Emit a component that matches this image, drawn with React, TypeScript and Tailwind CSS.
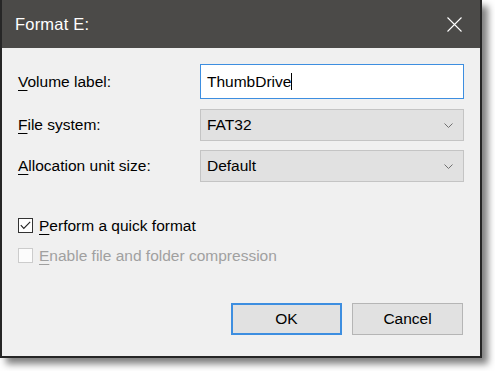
import React from "react";

const font = { fontFamily: '"Liberation Sans", Arial, sans-serif' };

const Chevron = () => (
  <svg width="9" height="5" viewBox="0 0 9 5" className="shrink-0">
    <path d="M0.5 0.5 L4.5 4.5 L8.5 0.5" fill="none" stroke="#707070" strokeWidth="1" />
  </svg>
);

type RowProps = {
  mnemonic: string;
  rest: string;
  children: React.ReactNode;
  className?: string;
};

const Row = ({ mnemonic, rest, children, className }: RowProps) => (
  <div className={"flex items-center " + (className ?? "")}>
    <div className="w-[182px] text-[15.5px] text-black">
      <span className="underline underline-offset-[3px] decoration-1">{mnemonic}</span>
      {rest}
    </div>
    {children}
  </div>
);

const Combo = ({ value }: { value: string }) => (
  <div className="w-[264px] h-[32px] flex items-center justify-between pl-[6px] pr-[10px] bg-[#e1e1e1] border border-[#c4c4c4] text-[15.5px] text-black">
    <span>{value}</span>
    <Chevron />
  </div>
);

export default function App() {
  return (
    <div className="w-[495px] h-[371px] bg-white" style={font}>
      <div className="w-[482px] h-[358px] flex flex-col border-x-2 border-b-2 border-[#262626] bg-[#f0f0f0] shadow-[6px_6px_7px_rgba(0,0,0,0.5)]">
        {/* title bar */}
        <div className="h-[48px] shrink-0 flex items-center justify-between bg-[#4b4a48] pl-[13px] pr-[18px]">
          <span className="text-[16.5px] text-white tracking-[0.2px]">Format E:</span>
          <svg width="15" height="15" viewBox="0 0 15 15">
            <path d="M0.5 0.5 L14.5 14.5 M14.5 0.5 L0.5 14.5" stroke="#ffffff" strokeWidth="1.1" fill="none" />
          </svg>
        </div>

        <div className="flex flex-col pt-[16px] pl-[16px]">
          <Row mnemonic="V" rest="olume label:">
            <div className="w-[264px] h-[35px] flex items-center pl-[6px] bg-white border border-[#3d8ee0] text-[15.5px] text-black">
              <span>ThumbDrive</span>
              <span className="w-[1px] h-[17px] bg-black" />
            </div>
          </Row>
          <Row mnemonic="F" rest="ile system:" className="mt-[10px]">
            <Combo value="FAT32" />
          </Row>
          <Row mnemonic="A" rest="llocation unit size:" className="mt-[9px]">
            <Combo value="Default" />
          </Row>

          <div className="mt-[36px] h-[15px] flex items-center gap-[6px] text-[15.5px] text-black">
            <div className="w-[15px] h-[15px] border border-[#333333] bg-white flex items-center justify-center">
              <svg width="11" height="9" viewBox="0 0 11 9">
                <path d="M0.8 4.2 L3.8 7.4 L10.2 0.8" fill="none" stroke="#222222" strokeWidth="1.1" />
              </svg>
            </div>
            <span>
              <span className="underline underline-offset-[3px] decoration-1">P</span>erform a quick format
            </span>
          </div>

          <div className="mt-[15px] h-[15px] flex items-center gap-[6px] text-[15.5px] text-[#a0a0a0]">
            <div className="w-[15px] h-[15px] border border-[#cccccc] bg-[#fcfcfc]" />
            <span>
              <span className="underline underline-offset-[3px] decoration-1">E</span>nable file and folder compression
            </span>
          </div>
        </div>

        <div className="mt-[40px] flex justify-end gap-[10px] pr-[17px]">
          <button className="w-[111px] h-[32px] bg-[#e1e1e1] border-2 border-[#3d8ee0] text-[15.5px] text-black">
            OK
          </button>
          <button className="w-[111px] h-[32px] bg-[#e1e1e1] border border-[#b5b5b5] text-[15.5px] text-black">
            Cancel
          </button>
        </div>
      </div>
    </div>
  );
}
